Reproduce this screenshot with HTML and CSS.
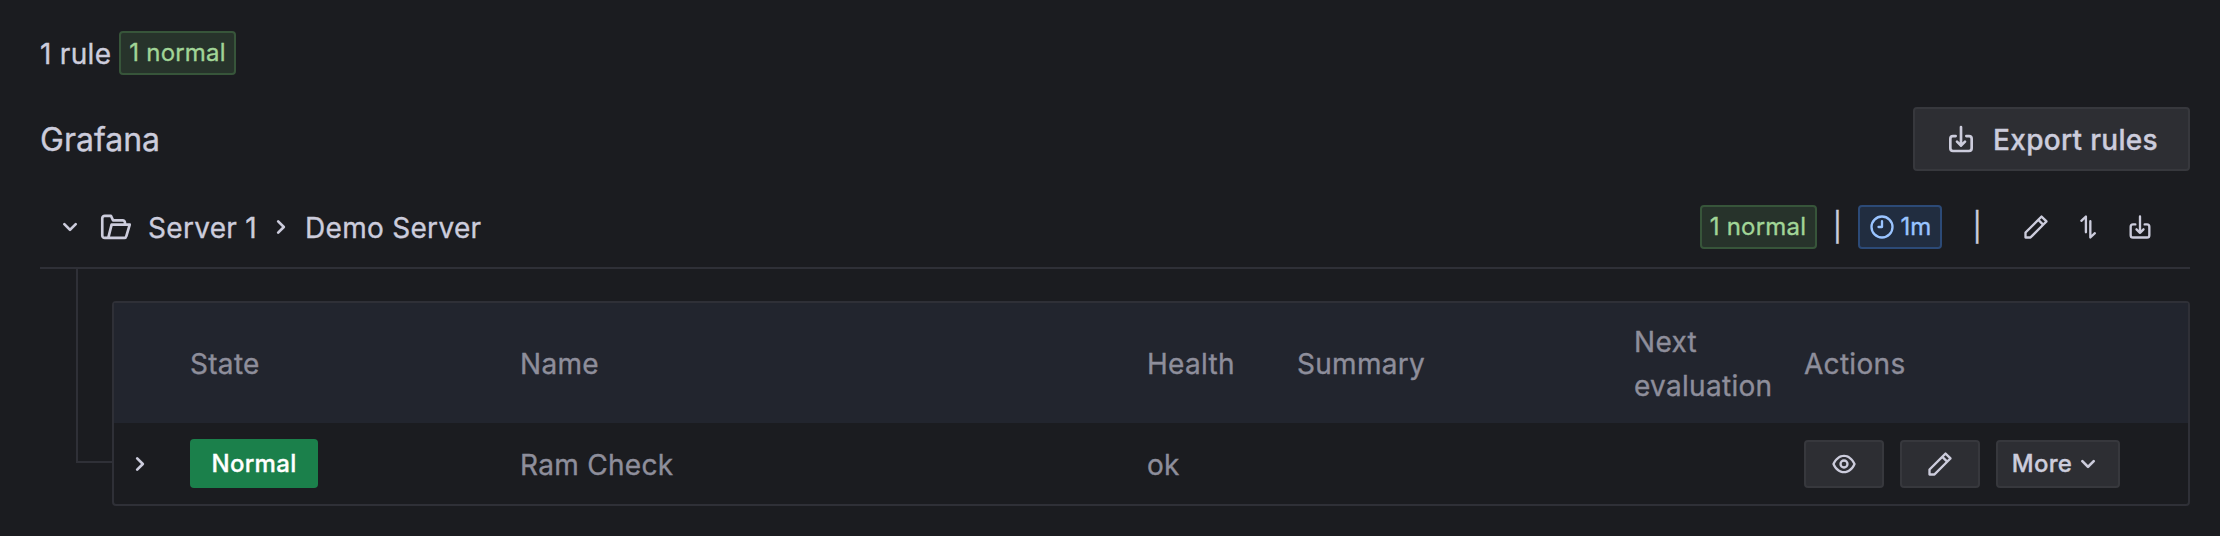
FILE: index.html
```html
<!DOCTYPE html>
<html lang="en">
<head>
<meta charset="utf-8">
<title>Alert rules</title>
<link rel="stylesheet" href="styles.css">
</head>
<body>
<svg class="sprite" aria-hidden="true">
  <symbol id="angle-down" viewBox="0 0 24 24"><path d="M17,9.17a1,1,0,0,0-1.41,0L12,12.71,8.46,9.17a1,1,0,0,0-1.41,0,1,1,0,0,0,0,1.42l4.24,4.24a1,1,0,0,0,1.42,0L17,10.59A1,1,0,0,0,17,9.17Z"/></symbol>
  <symbol id="angle-right" viewBox="0 0 24 24"><path d="M14.83,11.29,10.59,7.05a1,1,0,0,0-1.42,0,1,1,0,0,0,0,1.41L12.71,12,9.17,15.54a1,1,0,0,0,0,1.41,1,1,0,0,0,.71.29,1,1,0,0,0,.71-.29l4.24-4.24A1,1,0,0,0,14.83,11.29Z"/></symbol>
  <symbol id="pen" viewBox="0 0 24 24"><path d="M22,7.24a1,1,0,0,0-.29-.71L17.47,2.29A1,1,0,0,0,16.76,2a1,1,0,0,0-.71.29L13.22,5.12h0L2.29,16.05a1,1,0,0,0-.29.71V21a1,1,0,0,0,1,1H7.24A1,1,0,0,0,8,21.71L18.87,10.78h0L21.71,8a1.19,1.19,0,0,0,.22-.33,1,1,0,0,0,0-.24.7.7,0,0,0,0-.14ZM6.83,20H4V17.17l9.93-9.93,2.83,2.83ZM18.17,8.66,15.34,5.83l1.42-1.41,2.82,2.82Z"/></symbol>
  <symbol id="clock-nine" viewBox="0 0 24 24"><path d="M12,2A10,10,0,1,0,22,12,10,10,0,0,0,12,2Zm0,18a8,8,0,1,1,8-8A8,8,0,0,1,12,20ZM12,6a1,1,0,0,0-1,1v4H9a1,1,0,0,0,0,2h3a1,1,0,0,0,1-1V7A1,1,0,0,0,12,6Z"/></symbol>
  <symbol id="eye" viewBox="0 0 24 24"><path d="M21.92,11.6C19.9,6.91,16.1,4,12,4S4.1,6.91,2.08,11.6a1,1,0,0,0,0,.8C4.1,17.09,7.9,20,12,20s7.9-2.91,9.92-7.6A1,1,0,0,0,21.92,11.6ZM12,18c-3.17,0-6.17-2.29-7.9-6C5.83,8.29,8.83,6,12,6s6.17,2.29,7.9,6C18.17,15.71,15.17,18,12,18ZM12,8a4,4,0,1,0,4,4A4,4,0,0,0,12,8Zm0,6a2,2,0,1,1,2-2A2,2,0,0,1,12,14Z"/></symbol>
  <symbol id="import" viewBox="0 0 24 24"><path class="line" d="M12 3v14M9 14l3 3 3-3M8 9.8H6a2 2 0 0 0-2 2v7.2a2 2 0 0 0 2 2h12a2 2 0 0 0 2-2v-7.2a2 2 0 0 0-2-2h-2"/></symbol>
  <symbol id="arrows" viewBox="0 0 24 24"><path class="line" d="M6.3 6.7l3.9-3.7v13.5M14 7v14l3.9-3.7"/></symbol>
  <symbol id="folder-open" viewBox="0 0 24 24"><path class="line" d="M4.2 20.2H3.6A1.9 1.9 0 0 1 1.7 18.3V5.5A1.9 1.9 0 0 1 3.6 3.6H8.2L9.8 7H17A1.7 1.7 0 0 1 18.7 8.7V10.2M4.6 20.2H18.2A1.5 1.5 0 0 0 19.7 19L22.3 10.2H8.7L6.5 19A1.6 1.6 0 0 1 4.6 20.2Z"/></symbol>
</svg>

<main class="page">
  <div class="stats"><span class="text">1 rule</span><span class="badge badge-green">1 normal</span></div>

  <header class="source">
    <h5 class="source-title">Grafana</h5>
    <button class="btn btn-export"><svg class="icon icon-lg"><use href="#import"/></svg><span>Export rules</span></button>
  </header>

  <section>
    <div class="group">
      <svg class="icon icon-lg toggle"><use href="#angle-down"/></svg>
      <svg class="icon icon-lg folder"><use href="#folder-open"/></svg>
      <span class="crumb text">Server 1</span>
      <svg class="icon icon-lg crumb-sep"><use href="#angle-right"/></svg>
      <span class="crumb text">Demo Server</span>
      <div class="group-side">
        <span class="badge badge-green">1 normal</span>
        <span class="sep">|</span>
        <span class="badge badge-blue"><svg class="icon"><use href="#clock-nine"/></svg>1m</span>
        <span class="sep sep-wide">|</span>
        <div class="group-actions">
          <svg class="icon"><use href="#pen"/></svg>
          <svg class="icon"><use href="#arrows"/></svg>
          <svg class="icon"><use href="#import"/></svg>
        </div>
      </div>
    </div>

    <div class="tree">
      <div class="guide"></div>
      <div class="table">
        <div class="row row-head">
          <span></span><span class="text">State</span><span class="text">Name</span><span class="text">Health</span><span class="text">Summary</span><span class="text">Next evaluation</span><span class="text">Actions</span>
        </div>
        <div class="row row-body">
          <svg class="icon icon-lg expand"><use href="#angle-right"/></svg>
          <span class="state">Normal</span>
          <span class="text">Ram Check</span>
          <span class="text">ok</span>
          <span></span>
          <span></span>
          <div class="actions">
            <button class="btn btn-sm"><svg class="icon"><use href="#eye"/></svg></button>
            <button class="btn btn-sm"><svg class="icon"><use href="#pen"/></svg></button>
            <button class="btn btn-sm btn-more"><span>More</span><svg class="icon icon-lg"><use href="#angle-down"/></svg></button>
          </div>
        </div>
      </div>
    </div>
  </section>
</main>
</body>
</html>
```
FILE: styles.css
```css
* { box-sizing: border-box; }

body {
  margin: 0;
  background: #1b1c20;
  color: #ccccdc;
  font: 400 28px/44px Inter, "Liberation Sans", sans-serif;
  letter-spacing: 0.3px;
  -webkit-text-stroke: 0.35px;
}

.sprite { position: absolute; width: 0; height: 0; }
.page { padding: 31px 30px 0 40px; }
.text { padding-top: 2px; }

.icon { width: 28px; height: 28px; flex: none; fill: currentColor; display: block; }
.icon-lg { width: 32px; height: 32px; }
.line { fill: none; stroke: currentColor; stroke-width: 2; stroke-linecap: round; stroke-linejoin: round; }

.stats { display: flex; align-items: center; gap: 8px; height: 44px; }

.badge {
  display: flex;
  align-items: center;
  gap: 4px;
  height: 44px;
  padding: 0 8px;
  border: 2px solid;
  border-radius: 4px;
  font-size: 24px;
  line-height: 36px;
  letter-spacing: 0.22px;
}
.badge-green { width: 117px; color: #a1d597; background: #27332b; border-color: #37553a; }
.badge-blue { width: 84px; color: #9ac4ff; background: #212d40; border-color: #2c4a77; }

.source {
  display: flex;
  align-items: center;
  justify-content: space-between;
  margin-top: 32px;
}
.source-title { margin: 0; padding-top: 2px; font-size: 32px; font-weight: 400; letter-spacing: 0; }

.btn {
  display: flex;
  align-items: center;
  justify-content: center;
  height: 48px;
  padding: 0;
  border: 2px solid #37383d;
  border-radius: 4px;
  background: #2d2e33;
  color: #ccccdc;
  font: 500 24px/36px Inter, "Liberation Sans", sans-serif;
  letter-spacing: 0.3px;
  white-space: nowrap;
}
.btn-export { width: 277px; height: 64px; gap: 16px; font-size: 28px; }
.btn-export span { padding-top: 2px; }

.group {
  display: flex;
  align-items: center;
  height: 98px;
  padding: 16px 36px 0 14px;
  border-bottom: 2px solid #2f3037;
}
.folder { margin-left: 14px; }
.crumb:first-of-type { margin-left: 16px; }
.crumb-sep { margin: 0 8px; }
.group-side { display: flex; align-items: center; margin-left: auto; }
.sep { margin: 0 16px; }
.sep-wide { margin: 0 40px 0 30px; }
.group-actions { display: flex; gap: 24px; }

.tree { display: flex; }
.guide {
  width: 36px;
  height: 194px;
  margin-left: 36px;
  border: solid #2f3037;
  border-width: 0 0 2px 2px;
}
.table {
  flex: 1;
  margin-top: 32px;
  border: 2px solid #2f3037;
  border-radius: 4px;
}
.row {
  display: grid;
  grid-template-columns: 60px 314px 611px 134px 321px 154px 1fr;
  column-gap: 16px;
  align-items: center;
  color: #8e8e9b;
}
.row-head { height: 120px; background: #22252e; }
.row-body { height: 81px; }
.expand { margin-left: 10px; color: #ccccdc; }
.state {
  display: flex;
  align-items: center;
  justify-content: center;
  width: 128px;
  height: 49px;
  border-radius: 4px;
  background: #1b804b;
  color: #fff;
  font-size: 24px;
  font-weight: 500;
}
.actions { display: flex; gap: 16px; }
.btn-sm { width: 80px; }
.btn-more { width: 124px; }
```
